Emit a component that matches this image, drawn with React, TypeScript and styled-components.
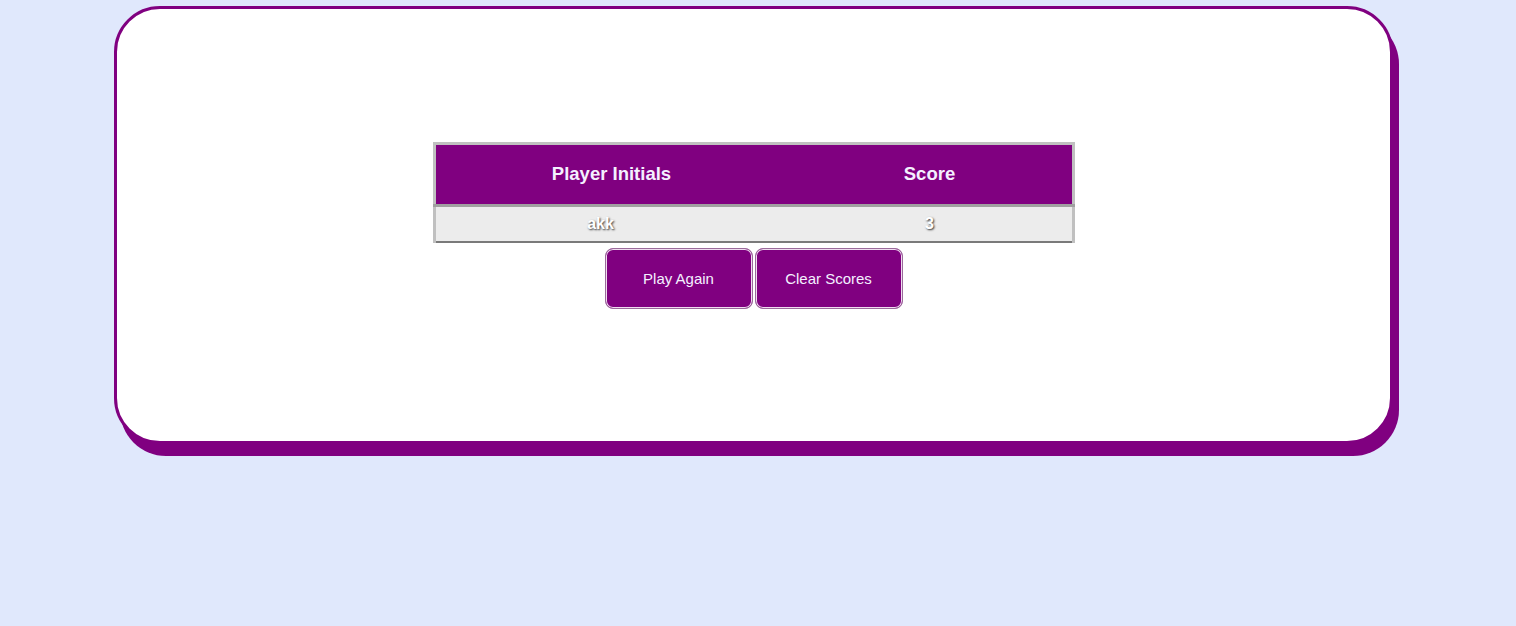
import React from "react";
import styled, { createGlobalStyle } from "styled-components";

const GlobalStyle = createGlobalStyle`
  html, body {
    margin: 0;
    padding: 0;
    background: #e0e8fc;
    font-family: "Liberation Sans", Arial, sans-serif;
  }
`;

const Page = styled.div`
  padding: 6px 0 40px 114px;
`;

const Card = styled.div`
  box-sizing: border-box;
  width: 1279px;
  height: 438px;
  background: #ffffff;
  border: 3px solid #800080;
  border-radius: 46px;
  box-shadow: 6px 12px 0 #800080;
  display: flex;
  flex-direction: column;
  align-items: center;
  justify-content: center;
  gap: 5px;
`;

const Table = styled.table`
  border-collapse: collapse;
  border: 3px solid #c0c0c0;
  border-bottom: 2px solid #7a7a7a;
  width: 642px;
`;

const HeadCell = styled.th<{ $w: number }>`
  width: ${(p) => p.$w}px;
  height: 59px;
  padding: 0;
  background: #800080;
  color: #f4f0ff;
  font-size: 18.5px;
  font-weight: bold;
  text-align: center;
  border-bottom: 3px solid #a0a0a0;
`;

const Cell = styled.td<{ $shift?: number }>`
  height: 34px;
  padding: 0 ${(p) => p.$shift ?? 0}px 0 0;
  background: #ececec;
  color: #ffffff;
  font-size: 16px;
  font-weight: bold;
  text-align: center;
  text-shadow: 1px 1px 2px #333;
`;

const Buttons = styled.div`
  display: flex;
  gap: 2px;
`;

const Button = styled.button`
  box-sizing: border-box;
  width: 148px;
  height: 61px;
  background: #800080;
  color: #f4f0ff;
  font-family: "Liberation Sans", Arial, sans-serif;
  font-size: 15px;
  border: 1px solid #9a6a9a;
  box-shadow: inset 0 0 0 1px #f0dcf0;
  border-radius: 8px;
  cursor: pointer;
`;

export default function App() {
  return (
    <>
      <GlobalStyle />
      <Page>
        <Card>
          <Table>
            <thead>
              <tr>
                <HeadCell $w={352}>Player Initials</HeadCell>
                <HeadCell $w={284}>Score</HeadCell>
              </tr>
            </thead>
            <tbody>
              <tr>
                <Cell $shift={22}>akk</Cell>
                <Cell>3</Cell>
              </tr>
            </tbody>
          </Table>
          <Buttons>
            <Button>Play Again</Button>
            <Button>Clear Scores</Button>
          </Buttons>
        </Card>
      </Page>
    </>
  );
}
